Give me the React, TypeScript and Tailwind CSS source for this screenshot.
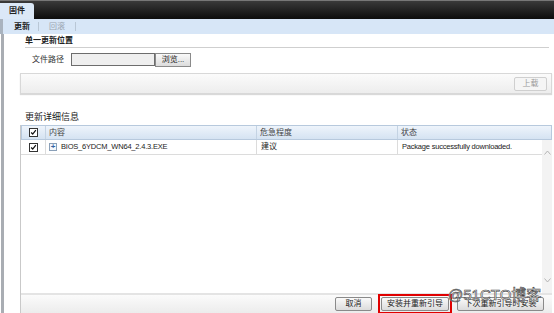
import React from "react";

const font = { fontFamily: '"Liberation Sans", Arial, "Noto Sans CJK SC", sans-serif' };

function Check() {
  return (
    <div className="w-[9px] h-[9px] border border-[#333] bg-white flex items-center justify-center">
      <svg width="9" height="9" viewBox="0 0 9 9">
        <path d="M1.5 4.5 L3.5 6.5 L7.5 1.5" stroke="#111" strokeWidth="1.6" fill="none" />
      </svg>
    </div>
  );
}

function Btn({ children, className = "" }: { children: React.ReactNode; className?: string }) {
  return (
    <div
      className={
        "h-[14px] flex items-center justify-center border border-[#8a8a8a] rounded-[2px] bg-gradient-to-b from-[#fafafa] to-[#dcdcdc] text-[8px] text-[#222] " +
        className
      }
    >
      {children}
    </div>
  );
}

export default function App() {
  return (
    <div className="w-[554px] h-[313px] bg-white overflow-hidden relative text-[8px] text-[#222]" style={font}>
      {/* top dark bar */}
      <div className="h-[19px] bg-gradient-to-b from-[#3a3a3a] to-[#0d0d0d] border-t border-[#777] flex items-end">
        <div className="w-[34px] h-[16px] bg-[#dbe8f7] rounded-tr-[3px] flex items-center pl-[9px] text-[8px] font-bold text-[#222]">
          固件
        </div>
      </div>
      {/* subtabs */}
      <div className="h-[15px] bg-[#d7e6f7] flex items-center text-[8px] border-l-[3px] border-[#a9b3bf]">
        <span className="ml-[11px] font-bold text-[#222]">更新</span>
        <span className="ml-[8px] w-px h-[9px] bg-[#b9c7d6]" />
        <span className="ml-[10px] text-[#9aa5b1]">回滚</span>
        <span className="ml-[10px] w-px h-[9px] bg-[#b9c7d6]" />
      </div>
      {/* body */}
      <div className="flex h-[279px]">
        <div className="w-[3px] ml-[1px] bg-[#a9adb3]" />
        <div className="flex-1 flex flex-col pl-[16px] pr-[2px]">
          {/* section 1 */}
          <div className="mt-[2px] ml-[5px] mr-[3px] border-b border-[#cfcfcf] pb-[1px] text-[8px] leading-[10px] font-bold">
            单一更新位置
          </div>
          <div className="flex items-center mt-[5px] ml-[12px] h-[13px]">
            <span className="w-[39px] text-[#333]">文件路径</span>
            <div className="w-[84px] h-[13px] border border-[#6d6d6d] bg-[#efefef]" />
            <Btn className="w-[36px] h-[13px] rounded-none">浏览...</Btn>
          </div>
          <div className="mt-[7px] h-[21px] border border-[#d8d8d8] bg-gradient-to-b from-[#fbfbfb] to-[#ededed] flex items-center justify-end pr-[4px] shadow-[0_1px_1px_rgba(0,0,0,0.15)]">
            <div className="w-[33px] h-[14px] border border-[#cfcfcf] rounded-[2px] bg-[#f5f5f5] flex items-center justify-center text-[#9a9a9a]">
              上载
            </div>
          </div>
          {/* section 2 */}
          <div className="mt-[17px] ml-[5px] text-[9px] leading-[12px] text-[#222]">更新详细信息</div>
          <div className="mt-[2px] flex-1 border-l border-[#c9c9c9] flex flex-col">
            <div className="h-[15px] flex items-stretch border border-[#b7c9dd] bg-gradient-to-b from-[#eef4fb] to-[#d5e3f2]">
              <div className="w-[24px] flex items-center justify-center border-r border-[#c4d3e3]">
                <Check />
              </div>
              <div className="w-[211px] flex items-center pl-[3px] border-r border-[#c4d3e3] text-[#444]">内容</div>
              <div className="w-[141px] flex items-center pl-[3px] border-r border-[#c4d3e3] text-[#444]">危急程度</div>
              <div className="flex-1 flex items-center pl-[3px] text-[#444]">状态</div>
            </div>
            <div className="flex flex-1">
              <div className="flex-1 flex flex-col">
                <div className="h-[15px] flex items-stretch border-b border-[#dcdcdc]">
                  <div className="w-[25px] flex items-center justify-center border-r border-[#dcdcdc]">
                    <Check />
                  </div>
                  <div className="w-[211px] flex items-center pl-[3px] border-r border-[#dcdcdc]">
                    <div className="w-[8px] h-[8px] border border-[#8aa0b8] bg-[#f4f8fc] flex items-center justify-center text-[#3465a4] text-[8px] leading-none font-bold mr-[4px]">
                      +
                    </div>
                    <span className="text-[7.5px] tracking-[-0.2px]">BIOS_6YDCM_WN64_2.4.3.EXE</span>
                  </div>
                  <div className="w-[141px] flex items-center pl-[4px] border-r border-[#dcdcdc]">建议</div>
                  <div className="flex-1 flex items-center pl-[4px] text-[7.5px] tracking-[-0.2px]">Package successfully downloaded.</div>
                </div>
              </div>
              <div className="w-[10px] bg-[#f3f3f3] flex flex-col items-center justify-between pt-[10px] pb-[10px]">
                <svg width="7" height="5" viewBox="0 0 7 5"><path d="M0.5 4.5 L3.5 1 L6.5 4.5" stroke="#b5b5b5" fill="none" /></svg>
                <svg width="7" height="5" viewBox="0 0 7 5"><path d="M0.5 0.5 L3.5 4 L6.5 0.5" stroke="#b5b5b5" fill="none" /></svg>
              </div>
            </div>
            <div className="h-[20px] border-t-2 border-[#e4e4e4] bg-gradient-to-b from-[#fbfbfb] to-[#ececec] flex items-center pl-[314px]">
              <Btn className="w-[37px]">取消</Btn>
              <div className="ml-[6px] border-2 border-[#e00000] p-[1px]">
                <Btn className="w-[68px]">安装并重新引导</Btn>
              </div>
              <Btn className="ml-[5px] w-[87px]">下次重新引导时安装</Btn>
            </div>
          </div>
        </div>
      </div>
      {/* watermark */}
      <div
        className="absolute left-[448px] top-[286px] text-[15px] leading-[18px] text-white"
        style={{ ...font, WebkitTextStroke: "0.6px #444" }}
      >
        @51CTO博客
      </div>
    </div>
  );
}
